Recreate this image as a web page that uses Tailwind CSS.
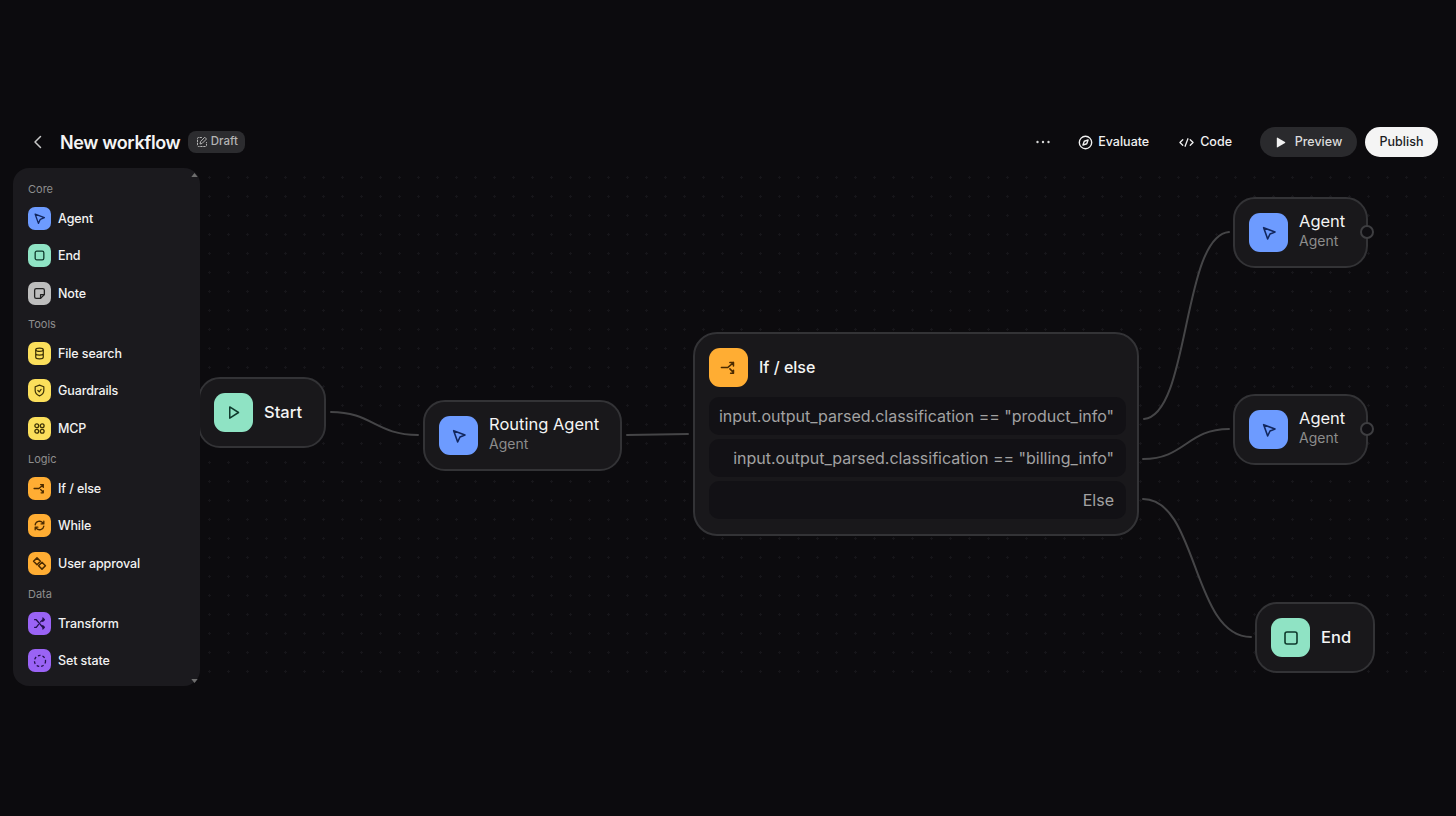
<!DOCTYPE html>
<html lang="en">
  <head>
    <meta charset="UTF-8" />
    <meta name="viewport" content="width=device-width, initial-scale=1.0" />
    <script src="https://cdn.jsdelivr.net/npm/@tailwindcss/browser@4"></script>
    <title>New workflow</title>
  </head>
  <body class="m-0 h-[816px] w-[1456px] overflow-hidden bg-[#0c0b0e] font-['Inter',sans-serif] text-white">
    <div class="relative flex h-full w-full flex-col pt-[127px]">
      <!-- HEADER -->
      <header class="flex h-[30px] items-center pl-[30px] pr-[18px]">
        <svg class="h-4 w-4 text-[#c8c8c8]" viewBox="0 0 16 16" fill="none" stroke="currentColor" stroke-width="1.5" stroke-linecap="round" stroke-linejoin="round"><path d="M10.5 2.5 5 8l5.5 5.5" /></svg>
        <h1 class="ml-[14px] mt-[2px] text-[18px] font-semibold leading-none tracking-[-0.36px] text-[#f4f4f4]">New workflow</h1>
        <span class="ml-2 flex h-[22px] w-[57px] items-center justify-center gap-[3px] rounded-lg bg-[#2c2c2f] text-[11.5px] font-medium text-[#b4b4b4]">
          <svg class="h-3 w-3" viewBox="0 0 24 24" fill="none" stroke="currentColor" stroke-width="2" stroke-linecap="round" stroke-linejoin="round"><path d="M11 3H5a2 2 0 0 0-2 2v14a2 2 0 0 0 2 2h14a2 2 0 0 0 2-2v-6" stroke-dasharray="3 3" /><path d="M18 3l3 3-9 9-4 1 1-4z" /></svg>
          Draft
        </span>
        <div class="ml-auto flex items-center text-[12.5px] font-medium text-[#f0f0f0]">
          <svg class="mr-[27px] h-4 w-4" viewBox="0 0 16 16" fill="#d8d8d8"><circle cx="2.5" cy="8" r="1.2" /><circle cx="8" cy="8" r="1.2" /><circle cx="13.5" cy="8" r="1.2" /></svg>
          <span class="flex items-center gap-[5px]">
            <svg class="h-[15px] w-[15px]" viewBox="0 0 16 16" fill="none" stroke="currentColor" stroke-width="1.5" stroke-linejoin="round"><circle cx="8" cy="8" r="6.6" /><path d="M10.8 5.2 9.3 9.3 5.2 10.8 6.7 6.7z" /></svg>
            Evaluate
          </span>
          <span class="ml-[30px] flex items-center gap-[6px]">
            <svg class="h-[15px] w-[15px]" viewBox="0 0 16 16" fill="none" stroke="currentColor" stroke-width="1.4" stroke-linecap="round" stroke-linejoin="round"><path d="M4 5 1 8l3 3M12 5l3 3-3 3M9.5 4l-3 8" /></svg>
            Code
          </span>
          <button class="ml-[28px] flex h-[30px] w-[97px] items-center justify-center gap-[9px] rounded-full bg-[#2a2a2d] text-[12.5px] font-medium text-[#dcdcdc]">
            <svg class="h-[11px] w-[11px]" viewBox="0 0 12 12" fill="#f2f2f2"><path d="M2 1.2a.6.6 0 0 1 .9-.5l8 4.8a.6.6 0 0 1 0 1l-8 4.8a.6.6 0 0 1-.9-.5z" /></svg>
            Preview
          </button>
          <button class="ml-2 flex h-[30px] w-[73px] items-center justify-center rounded-full bg-[#f4f4f4] text-[12.5px] font-medium text-[#1c1c1e]">Publish</button>
        </div>
      </header>

      <!-- BODY -->
      <div class="flex flex-1 pl-[13px] pt-[11px]">
        <aside class="relative z-10 h-[518px] w-[187px] rounded-2xl bg-[#1b1a1e] px-[15px] pt-[9px]">
          <div class="flex h-[22.5px] items-center pt-[2px] text-[11px] text-[#8e8e8e]">Core</div>
          <div class="flex h-[37.5px] items-center gap-[7px] text-[12.5px] font-medium tracking-[-0.1px] text-[#f2f2f2]">
            <span class="flex h-[23px] w-[23px] items-center justify-center rounded-[7px] bg-[#6d9bff] text-[#12275e]"><svg class="h-[13px] w-[13px]" viewBox="0 0 24 24" fill="none" stroke="currentColor" stroke-width="2.4" stroke-linejoin="round"><path d="M4 4l17 6.5-7.5 3L10 21z" /></svg></span>
            <span class="pt-[2px]">Agent</span>
          </div>
          <div class="flex h-[37.5px] items-center gap-[7px] text-[12.5px] font-medium tracking-[-0.1px] text-[#f2f2f2]">
            <span class="flex h-[23px] w-[23px] items-center justify-center rounded-[7px] bg-[#8fe3c4] text-[#0f3a2c]"><svg class="h-[13px] w-[13px]" viewBox="0 0 24 24" fill="none" stroke="currentColor" stroke-width="2.4"><rect x="4" y="4" width="16" height="16" rx="3" /></svg></span>
            <span class="pt-[2px]">End</span>
          </div>
          <div class="flex h-[37.5px] items-center gap-[7px] text-[12.5px] font-medium tracking-[-0.1px] text-[#f2f2f2]">
            <span class="flex h-[23px] w-[23px] items-center justify-center rounded-[7px] bg-[#bdbdbd] text-[#222]"><svg class="h-[13px] w-[13px]" viewBox="0 0 24 24" fill="none" stroke="currentColor" stroke-width="2.4" stroke-linejoin="round"><path d="M6 3h12a3 3 0 0 1 3 3v8l-7 7H6a3 3 0 0 1-3-3V6a3 3 0 0 1 3-3z" /><path d="M14 21v-7h7" /></svg></span>
            <span class="pt-[2px]">Note</span>
          </div>

          <div class="flex h-[22.5px] items-center pt-[2px] text-[11px] text-[#8e8e8e]">Tools</div>
          <div class="flex h-[37.5px] items-center gap-[7px] text-[12.5px] font-medium tracking-[-0.1px] text-[#f2f2f2]">
            <span class="flex h-[23px] w-[23px] items-center justify-center rounded-[7px] bg-[#fbdf5b] text-[#3d3206]"><svg class="h-[13px] w-[13px]" viewBox="0 0 24 24" fill="none" stroke="currentColor" stroke-width="2.2"><ellipse cx="12" cy="5" rx="7" ry="3" /><path d="M5 5v14c0 1.7 3 3 7 3s7-1.300 7-3V5M5 12c0 1.700 3 3 7 3s7-1.300 7-3" /></svg></span>
            <span class="pt-[2px]">File search</span>
          </div>
          <div class="flex h-[37.5px] items-center gap-[7px] text-[12.5px] font-medium tracking-[-0.1px] text-[#f2f2f2]">
            <span class="flex h-[23px] w-[23px] items-center justify-center rounded-[7px] bg-[#fbdf5b] text-[#3d3206]"><svg class="h-[13px] w-[13px]" viewBox="0 0 24 24" fill="none" stroke="currentColor" stroke-width="2.2" stroke-linecap="round" stroke-linejoin="round"><path d="M12 2l8 3v7c0 5-3.500 8-8 10-4.500-2-8-5-8-10V5z" /><path d="M9 12l2.500 2.500L15 10" /></svg></span>
            <span class="pt-[2px]">Guardrails</span>
          </div>
          <div class="flex h-[37.5px] items-center gap-[7px] text-[12.5px] font-medium tracking-[-0.1px] text-[#f2f2f2]">
            <span class="flex h-[23px] w-[23px] items-center justify-center rounded-[7px] bg-[#fbdf5b] text-[#3d3206]"><svg class="h-[13px] w-[13px]" viewBox="0 0 24 24" fill="none" stroke="currentColor" stroke-width="2.4"><circle cx="7" cy="7" r="3.500" /><circle cx="17" cy="7" r="3.500" /><circle cx="7" cy="17" r="3.500" /><circle cx="17" cy="17" r="3.500" /></svg></span>
            <span class="pt-[2px]">MCP</span>
          </div>

          <div class="flex h-[22.5px] items-center pt-[2px] text-[11px] text-[#8e8e8e]">Logic</div>
          <div class="flex h-[37.5px] items-center gap-[7px] text-[12.5px] font-medium tracking-[-0.1px] text-[#f2f2f2]">
            <span class="flex h-[23px] w-[23px] items-center justify-center rounded-[7px] bg-[#ffad33] text-[#4a2a00]"><svg class="h-[13px] w-[13px]" viewBox="0 0 24 24" fill="none" stroke="currentColor" stroke-width="2.4" stroke-linecap="round" stroke-linejoin="round"><path d="M2 12h9l8-7M14 5h5v5M14 14l5 5M15 20h4v-4" /></svg></span>
            <span class="pt-[2px]">If / else</span>
          </div>
          <div class="flex h-[37.5px] items-center gap-[7px] text-[12.5px] font-medium tracking-[-0.1px] text-[#f2f2f2]">
            <span class="flex h-[23px] w-[23px] items-center justify-center rounded-[7px] bg-[#ffad33] text-[#4a2a00]"><svg class="h-[13px] w-[13px]" viewBox="0 0 24 24" fill="none" stroke="currentColor" stroke-width="2.4" stroke-linecap="round" stroke-linejoin="round"><path d="M4 11a8 8 0 0 1 14-4l2 2M20 4v5h-5M20 13a8 8 0 0 1-14 4l-2-2M4 20v-5h5" /></svg></span>
            <span class="pt-[2px]">While</span>
          </div>
          <div class="flex h-[37.5px] items-center gap-[7px] text-[12.5px] font-medium tracking-[-0.1px] text-[#f2f2f2]">
            <span class="flex h-[23px] w-[23px] items-center justify-center rounded-[7px] bg-[#ffad33] text-[#4a2a00]"><svg class="h-[15px] w-[15px]" viewBox="0 0 24 24" fill="none" stroke="currentColor" stroke-width="2.4" stroke-linejoin="round"><path d="M8 3l5.500 5.500L8 14 2.500 8.500z" /><path d="M16 10l5.500 5.500L16 21l-5.500-5.500z" /></svg></span>
            <span class="pt-[2px]">User approval</span>
          </div>

          <div class="flex h-[22.5px] items-center pt-[2px] text-[11px] text-[#8e8e8e]">Data</div>
          <div class="flex h-[37.5px] items-center gap-[7px] text-[12.5px] font-medium tracking-[-0.1px] text-[#f2f2f2]">
            <span class="flex h-[23px] w-[23px] items-center justify-center rounded-[7px] bg-[#9a63f5] text-[#23104d]"><svg class="h-[13px] w-[13px]" viewBox="0 0 24 24" fill="none" stroke="currentColor" stroke-width="2.4" stroke-linecap="round" stroke-linejoin="round"><path d="M3 5h3l12 14h3M3 19h3l4-5M14 9l4-4h3M18 2l3 3-3 3M18 16l3 3-3 3" /></svg></span>
            <span class="pt-[2px]">Transform</span>
          </div>
          <div class="flex h-[37.5px] items-center gap-[7px] text-[12.5px] font-medium tracking-[-0.1px] text-[#f2f2f2]">
            <span class="flex h-[23px] w-[23px] items-center justify-center rounded-[7px] bg-[#9a63f5] text-[#23104d]"><svg class="h-[14px] w-[14px]" viewBox="0 0 24 24" fill="none" stroke="currentColor" stroke-width="2.2" stroke-dasharray="4.500 3.500"><circle cx="12" cy="12" r="9.500" /></svg></span>
            <span class="pt-[2px]">Set state</span>
          </div>

          <svg class="absolute right-[2px] top-[5px] h-[4px] w-[7px]" viewBox="0 0 8 5" fill="#6e6e6e"><path d="M4 0l4 5H0z" /></svg>
          <svg class="absolute bottom-[3px] right-[2px] h-[4px] w-[7px]" viewBox="0 0 8 5" fill="#6e6e6e"><path d="M4 5 8 0H0z" /></svg>
        </aside>
      </div>

      <!-- CANVAS -->
      <div class="absolute left-[200px] top-[168px] h-[518px] w-[1244px] bg-[radial-gradient(#17161a_1px,transparent_1.2px)] bg-[size:19px_19px]"></div>

      <svg class="absolute left-0 top-0 h-[816px] w-[1456px]" viewBox="0 0 1456 816" fill="none" stroke="#454547" stroke-width="2" stroke-linecap="round">
        <path d="M331 412C372 412 376 435 418 435" />
        <path d="M627 435 688 434" />
        <path d="M1144 419C1190 415 1182 236 1229 232" />
        <path d="M1143 459C1185 459 1187 429 1229 429" />
        <path d="M1143 499C1198 499 1192 637 1251 637" />
      </svg>

      <!-- NODES -->
      <div class="absolute left-[198px] top-[377px] flex h-[71px] w-[128px] items-center gap-[11px] rounded-[22px] border-2 border-[#333336] bg-[#19181b] pl-[14px]">
        <span class="flex h-[39px] w-[39px] items-center justify-center rounded-[11px] bg-[#8fe3c4] text-[#0f3a2c]"><svg class="h-[15px] w-[15px]" viewBox="0 0 24 24" fill="none" stroke="currentColor" stroke-width="2.400" stroke-linejoin="round"><path d="M6 3l14 9-14 9z" /></svg></span>
        <span class="text-[16.5px] font-medium text-[#f4f4f4]">Start</span>
      </div>

      <div class="absolute left-[423px] top-[400px] flex h-[71px] w-[199px] items-center gap-[11px] rounded-[22px] border-2 border-[#333336] bg-[#19181b] pl-[14px]">
        <span class="flex h-[39px] w-[39px] items-center justify-center rounded-[11px] bg-[#6d9bff] text-[#12275e]"><svg class="h-4 w-4" viewBox="0 0 24 24" fill="none" stroke="currentColor" stroke-width="2.400" stroke-linejoin="round"><path d="M4 4l17 6.500-7.500 3L10 21z" /></svg></span>
        <div class="mb-[4px] flex flex-col">
          <span class="text-[16.5px] font-normal leading-5 text-[#f4f4f4]">Routing Agent</span>
          <span class="text-[14px] leading-5 text-[#8c8c8c]">Agent</span>
        </div>
      </div>

      <div class="absolute left-[693px] top-[332px] h-[204px] w-[446px] rounded-[24px] border-2 border-[#333336] bg-[#19181b] pl-[14px] pr-[11px] pt-[14px]">
        <div class="flex items-center gap-[11px]">
          <span class="flex h-[39px] w-[39px] items-center justify-center rounded-[11px] bg-[#ffad33] text-[#4a2a00]"><svg class="h-[17px] w-[17px]" viewBox="0 0 24 24" fill="none" stroke="currentColor" stroke-width="2.200" stroke-linecap="round" stroke-linejoin="round"><path d="M2 12h9l8-7M14 5h5v5M14 14l5 5M15 20h4v-4" /></svg></span>
          <span class="mb-[2px] text-[16px] font-medium text-[#f4f4f4]">If / else</span>
        </div>
        <div class="mt-[10px] flex flex-col gap-[4px] whitespace-nowrap text-[16px] text-[#a2a2a2]">
          <div class="flex h-[38px] items-center justify-end rounded-[10px] bg-[#121115] pr-3">input.output_parsed.classification == "product_info"</div>
          <div class="flex h-[38px] items-center justify-end rounded-[10px] bg-[#121115] pr-3">input.output_parsed.classification == "billing_info"</div>
          <div class="flex h-[38px] items-center justify-end rounded-[10px] bg-[#121115] pr-3">Else</div>
        </div>
      </div>

      <div class="absolute left-[1233px] top-[197px] flex h-[71px] w-[135px] items-center gap-[11px] rounded-[22px] border-2 border-[#333336] bg-[#19181b] pl-[14px]">
        <span class="flex h-[39px] w-[39px] items-center justify-center rounded-[11px] bg-[#6d9bff] text-[#12275e]"><svg class="h-4 w-4" viewBox="0 0 24 24" fill="none" stroke="currentColor" stroke-width="2.400" stroke-linejoin="round"><path d="M4 4l17 6.500-7.500 3L10 21z" /></svg></span>
        <div class="mb-[4px] flex flex-col">
          <span class="text-[16.5px] font-normal leading-5 text-[#f4f4f4]">Agent</span>
          <span class="text-[14px] leading-5 text-[#8c8c8c]">Agent</span>
        </div>
        <span class="absolute right-[-8px] top-[26px] h-[14px] w-[14px] rounded-full border-2 border-[#3e3e41] bg-[#0f0e12]"></span>
      </div>

      <div class="absolute left-[1233px] top-[394px] flex h-[71px] w-[135px] items-center gap-[11px] rounded-[22px] border-2 border-[#333336] bg-[#19181b] pl-[14px]">
        <span class="flex h-[39px] w-[39px] items-center justify-center rounded-[11px] bg-[#6d9bff] text-[#12275e]"><svg class="h-4 w-4" viewBox="0 0 24 24" fill="none" stroke="currentColor" stroke-width="2.400" stroke-linejoin="round"><path d="M4 4l17 6.500-7.500 3L10 21z" /></svg></span>
        <div class="mb-[4px] flex flex-col">
          <span class="text-[16.5px] font-normal leading-5 text-[#f4f4f4]">Agent</span>
          <span class="text-[14px] leading-5 text-[#8c8c8c]">Agent</span>
        </div>
        <span class="absolute right-[-8px] top-[26px] h-[14px] w-[14px] rounded-full border-2 border-[#3e3e41] bg-[#0f0e12]"></span>
      </div>

      <div class="absolute left-[1255px] top-[602px] flex h-[71px] w-[120px] items-center gap-[11px] rounded-[22px] border-2 border-[#333336] bg-[#19181b] pl-[14px]">
        <span class="flex h-[39px] w-[39px] items-center justify-center rounded-[11px] bg-[#8fe3c4] text-[#0f3a2c]"><svg class="h-4 w-4" viewBox="0 0 24 24" fill="none" stroke="currentColor" stroke-width="2.400"><rect x="3" y="3" width="18" height="18" rx="3" /></svg></span>
        <span class="text-[16.5px] font-medium text-[#f4f4f4]">End</span>
      </div>
    </div>
  </body>
</html>
